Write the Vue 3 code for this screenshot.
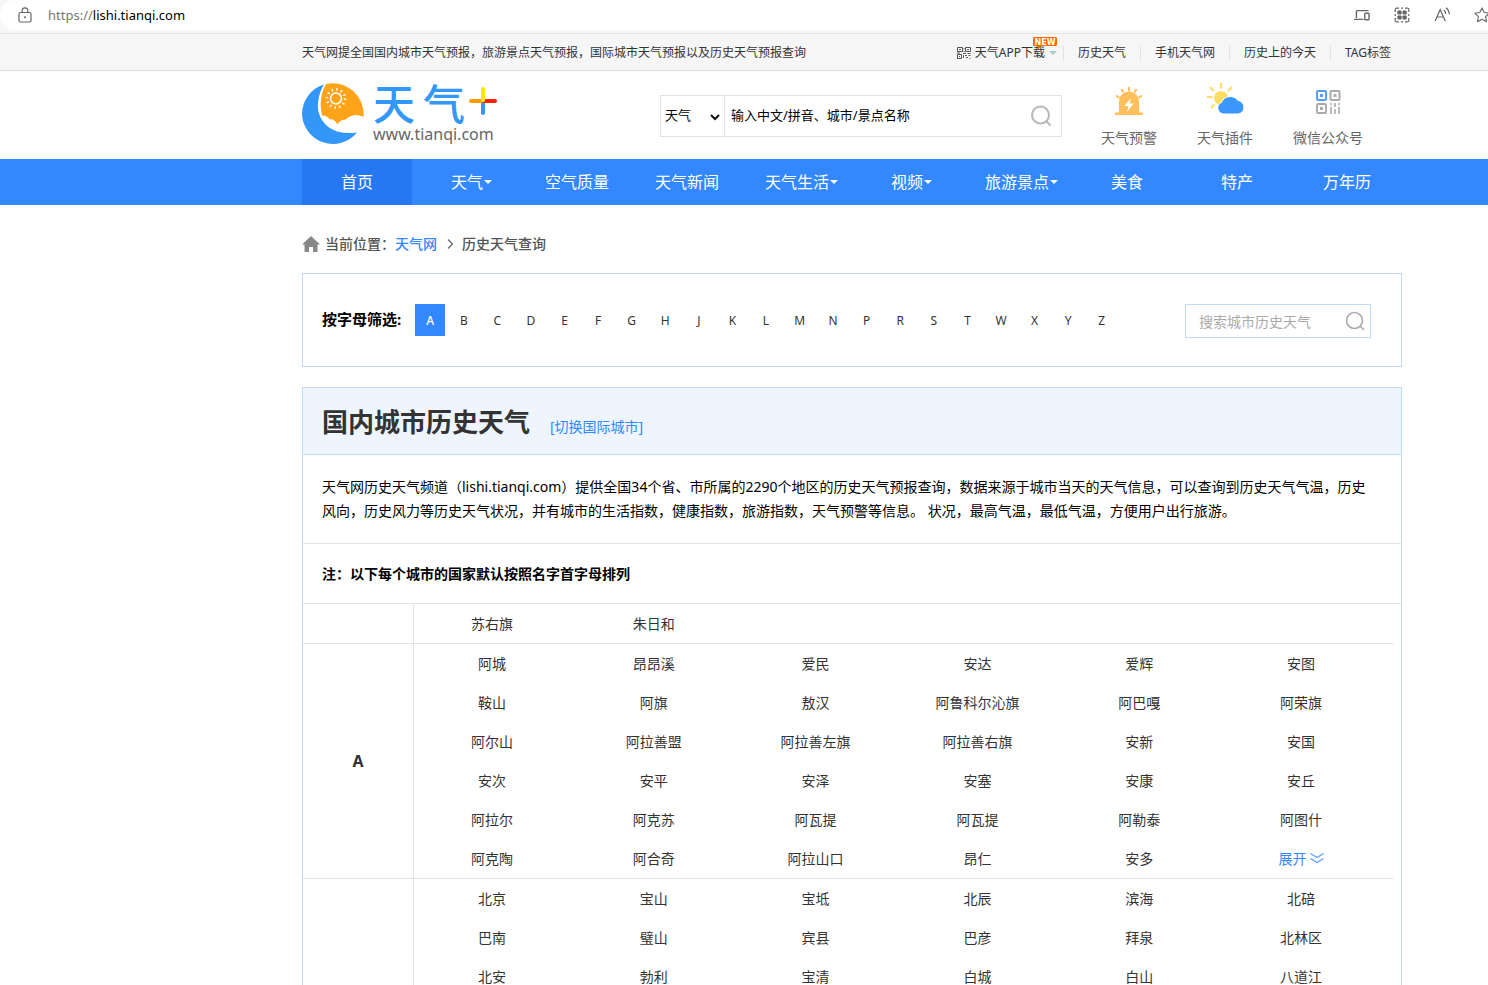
<script setup>
import { ref } from 'vue'

const topLinks = ['历史天气', '手机天气网', '历史上的今天', 'TAG标签']
const nav = [
  { name: '首页', active: true },
  { name: '天气', more: true },
  { name: '空气质量' },
  { name: '天气新闻' },
  { name: '天气生活', more: true },
  { name: '视频', more: true },
  { name: '旅游景点', more: true },
  { name: '美食' },
  { name: '特产' },
  { name: '万年历' },
]
const letters = 'ABCDEFGHJKLMNPRSTWXYZ'.split('')
const current = ref('A')
const groups = [
  { letter: '', cities: ['苏右旗', '朱日和'] },
  {
    letter: 'A',
    more: true,
    cities: [
      '阿城', '昂昂溪', '爱民', '安达', '爱辉', '安图',
      '鞍山', '阿旗', '敖汉', '阿鲁科尔沁旗', '阿巴嘎', '阿荣旗',
      '阿尔山', '阿拉善盟', '阿拉善左旗', '阿拉善右旗', '安新', '安国',
      '安次', '安平', '安泽', '安塞', '安康', '安丘',
      '阿拉尔', '阿克苏', '阿瓦提', '阿瓦提', '阿勒泰', '阿图什',
      '阿克陶', '阿合奇', '阿拉山口', '昂仁', '安多',
    ],
  },
  {
    letter: '',
    cities: [
      '北京', '宝山', '宝坻', '北辰', '滨海', '北碚',
      '巴南', '璧山', '宾县', '巴彦', '拜泉', '北林区',
      '北安', '勃利', '宝清', '白城', '白山', '八道江',
    ],
  },
]
</script>

<template>
  <div class="window">
    <div class="browser">
      <div class="address">
        <svg class="lock" width="14" height="16" viewBox="0 0 14 16" fill="none" stroke="#666">
          <rect x="1" y="5.5" width="12" height="9.5" rx="1.5" stroke-width="1.2" />
          <path d="M4.2 5.5V3.6a2.8 2.8 0 0 1 5.6 0v1.9" stroke-width="1.2" />
          <circle cx="7" cy="10.2" r="1" fill="#666" stroke="none" />
        </svg>
        <span class="url"><i>https://</i>lishi.tianqi.com</span>
        <div class="tools">
          <svg width="16" height="16" viewBox="0 0 16 16" fill="none" stroke="#666" stroke-width="1.4">
            <path d="M14.500 3.600H3.400a1 1 0 0 0-1 1V11M0 12.400h9.500" />
            <rect x="10.800" y="6.200" width="4.200" height="6.600" rx=".8" />
          </svg>
          <svg width="16" height="16" viewBox="0 0 16 16" fill="none" stroke="#666" stroke-width="1.200">
            <path d="M5 1.200H2.600A1.400 1.400 0 0 0 1.200 2.600V5M11 1.200h2.400a1.400 1.400 0 0 1 1.400 1.400V5M5 14.800H2.600a1.400 1.400 0 0 1-1.400-1.400V11M11 14.800h2.400a1.400 1.400 0 0 0 1.400-1.400V11M7 1.200h2M7 14.800h2M1.200 7v2M14.800 7v2" />
            <g fill="#666" stroke="none">
              <rect x="3.400" y="3.600" width="4.200" height="4" rx=".8" /><rect x="8.500" y="3.600" width="4.200" height="4" rx=".8" />
              <rect x="3.400" y="8.500" width="4.200" height="4" rx=".8" /><rect x="8.500" y="8.500" width="4.200" height="4" rx=".8" />
            </g>
          </svg>
          <svg width="16" height="16" viewBox="0 0 16 16" fill="none" stroke="#666" stroke-width="1.200">
            <path d="M1.200 14 6.200 2.400 11.200 14M3 10h6.400M9.800 3q1.800 1.400 1.900 4M12 .8q3.200 2.200 3.400 6.400" />
          </svg>
          <svg width="16" height="16" viewBox="0 0 16 16" fill="none" stroke="#666" stroke-width="1.100" stroke-linejoin="round">
            <path d="m8 .9 2.200 4.600 5 .7-3.600 3.500.9 5L8 12.300l-4.500 2.400.9-5L.8 6.200l5-.7z" />
          </svg>
        </div>
      </div>
    </div>

    <div class="topbar">
      <div class="wrap topbar-row">
        <p>天气网提全国国内城市天气预报，旅游景点天气预报，国际城市天气预报以及历史天气预报查询</p>
        <ul>
          <li>
            <a href="#" class="app">
              <svg width="14" height="12" viewBox="0 0 14 12" fill="none" stroke="#555">
                <path d="M.5.5h5v4h-5zM8.500.5h5v4h-5zM.5 7.500h4v4h-4zM2 2.500h2M10 2.500h2M2 9.500h1M6 6.500h3M10.500 6.500h3M6.500 8v3M8 8.500h2M9 10.500h2M11.500 8.500h2M12.500 11.500h1M0 6h3M7 1v1M7 4v1" />
              </svg>
              <span>天气APP下载</span>
              <b class="tri"></b>
              <svg class="new" width="24" height="13" viewBox="0 0 24 13">
                <path d="M1 0h22l1 1v7l-1 1H8l-3 4V9H1L0 8V1z" fill="#ff6600" />
                <text x="12" y="7.500" text-anchor="middle" class="new-text">NEW</text>
              </svg>
            </a>
          </li>
          <li v-for="l in topLinks" :key="l"><a href="#">{{ l }}</a></li>
        </ul>
      </div>
    </div>

    <header class="wrap header">
      <a href="#" class="logo">
        <svg width="63" height="63" viewBox="0 0 63 63">
          <path d="M22 1.500A31 31 0 0 0 0 31a31 31 0 0 0 55 18.500Q45 51 35 48.500 25 45 20 37 15 29 16 20 17 9 22 1.500z" fill="#3397f8" />
          <path d="M24 1A31 31 0 0 1 61.500 34Q56 31 51 32.500 46 33.500 44 36.500 38 36.500 35.500 41.500 32 35.500 28 36.500 25 32.500 20 32.500 16 15 24 1z" fill="#ffa318" />
          <circle cx="34" cy="15.500" r="5.500" fill="none" stroke="#fff" stroke-width="1.500" />
          <circle cx="34" cy="15.500" r="9" fill="none" stroke="#fff" stroke-width="2.600" stroke-dasharray="1.400 3.312" />
        </svg>
        <span class="brand">
          <span class="brand-name">
            <span>天</span><span>气</span>
            <svg width="28" height="28" viewBox="0 0 28 28" stroke-width="4" stroke-linecap="round">
              <path d="M14 16v10" stroke="#3397f8" />
              <path d="M2 14h11" stroke="#ff9c00" />
              <path d="M15 14h11" stroke="#ff1e00" />
              <path d="M14 2v11" stroke="#ffe800" />
            </svg>
          </span>
          <span class="brand-url">www.tianqi.com</span>
        </span>
      </a>
      <form class="search" @submit.prevent>
        <select aria-label="搜索类别"><option>天气</option></select>
        <svg class="chev" width="10" height="7" viewBox="0 0 10 7" fill="none" stroke="#111" stroke-width="2">
          <path d="m1 1 4 4 4-4" />
        </svg>
        <input type="text" aria-label="搜索" placeholder="输入中文/拼音、城市/景点名称" />
        <button type="submit" aria-label="搜索">
          <svg width="22" height="22" viewBox="0 0 22 22" fill="none" stroke="#b8b8b8" stroke-width="2">
            <circle cx="10.500" cy="10" r="8.500" /><path d="m16.500 16.500 4 4" />
          </svg>
        </button>
      </form>
      <nav class="quick">
        <a href="#">
          <svg width="38" height="34" viewBox="0 0 38 34">
            <path d="M5 29.500h4V18a10 9.500 0 0 1 20 0v11.500h4V32H5z" fill="#ffbf5a" />
            <path d="m21 15-6.500 8h4l-1.500 6 6.500-8.500h-4z" fill="#fff" />
            <path d="m6 12.500 3.500 2.500M11.500 6l2 3.500M19 4v4.500M26.500 6l-2 3.500M32 12.500l-3.500 2.500" stroke="#ffbf5a" stroke-width="2" />
          </svg>
          天气预警
        </a>
        <a href="#">
          <svg width="38" height="34" viewBox="0 0 38 34">
            <circle cx="15" cy="15" r="7" fill="#ffdc62" />
            <path d="M15 0v5.500M4 4l4 4M26 4l-4 4M1 14h5.500M5 25l3.500-3.500" stroke="#ffdc62" stroke-width="2" />
            <path d="M17 31a6 6 0 0 1-1.500-11.500A9.500 9.500 0 0 1 32 17.500a6.800 6.800 0 0 1 0 13.500z" fill="#3b97fb" stroke="#fff" />
          </svg>
          天气插件
        </a>
        <a href="#">
          <svg width="38" height="34" viewBox="0 0 38 34" fill="none" stroke-width="2">
            <rect x="8" y="8" width="9" height="9" rx="1" stroke="#5b9dfb" />
            <rect x="11" y="11" width="3" height="3" fill="#5b9dfb" />
            <g stroke="#aaa">
              <rect x="21.500" y="8" width="9" height="9" rx="1" />
              <rect x="8" y="21" width="9" height="9" rx="1" />
              <path d="M22 20v2M22 24v7M26 20v4M26 26v5M30 20v2M30 24v7" stroke-width="1.600" />
            </g>
            <rect x="24.500" y="11" width="3" height="3" fill="#aaa" />
            <rect x="11" y="24" width="3" height="3" fill="#aaa" />
          </svg>
          微信公众号
        </a>
      </nav>
    </header>

    <nav class="mainnav">
      <div class="wrap mainnav-row">
        <a v-for="n in nav" :key="n.name" href="#" :class="{ active: n.active }"><span :class="{ more: n.more }">{{ n.name }}</span></a>
      </div>
    </nav>

    <main class="wrap">
      <div class="crumbs">
        <svg width="18" height="16" viewBox="0 0 18 16" fill="#888">
          <path d="M9 0 18 8.500h-2.500V16h-4.500v-5H7v5H2.500V8.500H0z" />
        </svg>
        <span class="crumb-label">当前位置：</span>
        <a href="#">天气网</a>
        <svg class="sep" width="7" height="10" viewBox="0 0 7 10" fill="none" stroke="#666" stroke-width="1.300"><path d="m1 .5 4.500 4.500L1 9.500" /></svg>
        <span>历史天气查询</span>
      </div>

      <section class="filter">
        <strong>按字母筛选:</strong>
        <div class="letters">
          <button v-for="l in letters" :key="l" type="button" :class="{ on: l === current }" @click="current = l">{{ l }}</button>
        </div>
        <form class="city-search" @submit.prevent>
          <input type="text" aria-label="搜索城市历史天气" placeholder="搜索城市历史天气" />
          <button type="submit" aria-label="搜索">
            <svg width="20" height="20" viewBox="0 0 20 20" fill="none" stroke="#aaa" stroke-width="1.600">
              <circle cx="9.500" cy="9.500" r="8" /><path d="m15.500 15.500 3.500 3.500" />
            </svg>
          </button>
        </form>
      </section>

      <section class="panel">
        <div class="panel-head">
          <h1>国内城市历史天气</h1>
          <a href="#">[切换国际城市]</a>
        </div>
        <p class="intro">天气网历史天气频道（lishi.tianqi.com）提供全国34个省、市所属的2290个地区的历史天气预报查询，数据来源于城市当天的天气信息，可以查询到历史天气气温，历史风向，历史风力等历史天气状况，并有城市的生活指数，健康指数，旅游指数，天气预警等信息。 状况，最高气温，最低气温，方便用户出行旅游。</p>
        <p class="note">注：以下每个城市的国家默认按照名字首字母排列</p>
        <table>
          <tbody>
            <tr v-for="(g, i) in groups" :key="i">
              <th scope="row">{{ g.letter }}</th>
              <td>
                <ul>
                  <li v-for="(c, j) in g.cities" :key="j"><a href="#">{{ c }}</a></li>
                  <li v-if="g.more">
                    <button type="button">展开<svg width="14" height="11" viewBox="0 0 14 11" fill="none" stroke="#5a9dff" stroke-width="1.200"><path d="m.5.5 6.500 4 6.500-4M.5 5.500l6.500 4 6.500-4" /></svg></button>
                  </li>
                </ul>
              </td>
            </tr>
          </tbody>
        </table>
      </section>
    </main>
  </div>
</template>

<style>
body {
  margin: 0;
  background: #fff;
}
</style>

<style scoped>
.window {
  height: 100vh;
  overflow: hidden;
  font-family: "Noto Sans", "Noto Sans CJK SC", sans-serif;
  font-size: 14px;
  line-height: 24px;
  color: #333;
}
.window * {
  box-sizing: border-box;
}
a {
  color: inherit;
  text-decoration: none;
}
p,
h1,
ul {
  margin: 0;
  padding: 0;
  list-style: none;
}
button,
input,
select {
  font-family: inherit;
  padding: 0;
  border: 0;
  background: none;
  outline: none;
  border-radius: 0;
}
svg {
  display: block;
  flex: none;
}
.wrap {
  margin: 0 86px 0 302px;
}

.browser {
  background: #f7f7f7;
  padding-bottom: 3px;
  border-bottom: 1px solid #e6e6e6;
}
.address {
  display: flex;
  align-items: center;
  height: 30px;
  padding-left: 18px;
  background: #fff;
  border-radius: 15px 0 0 15px;
}
.url {
  flex: 1;
  margin-left: 16px;
  font-size: 13px;
  color: #000;
}
.url i {
  font-style: normal;
  color: #777;
}
.tools {
  display: flex;
  gap: 24px;
  margin-right: -2px;
}

.topbar {
  background: #f6f6f6;
  border-bottom: 1px solid #ddd;
  font-size: 12px;
}
.topbar-row {
  display: flex;
  justify-content: space-between;
  align-items: center;
  height: 36px;
  padding-top: 2px;
  white-space: nowrap;
}
.topbar ul {
  display: flex;
  padding-right: 11px;
}
.topbar li {
  padding: 0 14px;
  border-right: 1px solid #e4e0e0;
  line-height: 14px;
}
.topbar li:first-child {
  padding-right: 6px;
}
.topbar li:last-child {
  padding-right: 0;
  border: 0;
}
.app {
  position: relative;
  display: flex;
  align-items: center;
  gap: 4px;
}
.tri {
  border: 4px solid transparent;
  border-top-color: #a9cbd6;
  border-bottom: 0;
}
.new {
  position: absolute;
  right: 0;
  top: -9px;
}
.new-text {
  font: bold 8px "DejaVu Sans", sans-serif;
  fill: #fff;
}

.header {
  display: flex;
  align-items: flex-start;
  height: 88px;
}
.logo {
  display: flex;
  gap: 8px;
  padding-top: 12px;
  width: 358px;
}
.brand-name {
  display: flex;
  align-items: center;
  gap: 8px;
  height: 42px;
  font-size: 42px;
  font-weight: 500;
  line-height: 40px;
  color: #3397f8;
}
.brand-name svg {
  margin-left: -4px;
  align-self: flex-start;
  margin-top: 4px;
}
.brand-url {
  display: block;
  font-size: 16px;
  line-height: 18px;
  color: #666;
}
.search {
  position: relative;
  display: flex;
  flex: 1;
  max-width: 402px;
  height: 42px;
  margin-top: 24px;
  border: 1px solid #e2e2e2;
}
.search select {
  appearance: none;
  width: 64px;
  padding: 0 0 2px 4px;
  font-size: 13px;
  color: #000;
  border-right: 1px solid #e2e2e2;
}
.chev {
  position: absolute;
  left: 49px;
  top: 18px;
  pointer-events: none;
}
.search input {
  flex: 1;
  min-width: 0;
  padding: 0 0 2px 6px;
  font-size: 13px;
}
.search input::placeholder {
  color: #000;
  opacity: 1;
}
.search button {
  padding-right: 9px;
}
.quick {
  display: flex;
  gap: 40px;
  margin-left: auto;
  padding: 12px 39px 0 0;
  white-space: nowrap;
  color: #666;
}
.quick a {
  display: flex;
  flex-direction: column;
  align-items: center;
  gap: 9px;
}

.mainnav {
  background: #3388ff;
}
.mainnav-row {
  display: flex;
}
.mainnav a {
  flex: 1;
  display: flex;
  justify-content: center;
  align-items: center;
  height: 46px;
  font-size: 16px;
  color: #fff;
}
.mainnav .active {
  background: #2578f2;
}
.more {
  position: relative;
}
.more::after {
  content: "";
  position: absolute;
  left: 100%;
  top: 10px;
  margin-left: 1px;
  border: 4px solid transparent;
  border-top-color: #fff;
  border-bottom: 0;
}

.crumbs {
  display: flex;
  align-items: center;
  height: 68px;
  padding-top: 10px;
  font-weight: 500;
  color: #555;
}
.crumb-label {
  margin-left: 5px;
}
.crumbs a {
  color: #3388ff;
}
.crumbs .sep {
  margin: 0 8px 0 10px;
}

.filter {
  display: flex;
  align-items: flex-start;
  padding: 30px 30px 28px 19px;
  border: 1px solid #bfdbff;
}
.filter strong {
  font-size: 15px;
  line-height: 30px;
  color: #000;
}
.letters {
  flex: 1;
  display: flex;
  justify-content: space-between;
  margin: 0 68px 0 14px;
}
.letters button {
  width: 30px;
  height: 32px;
  font-size: 12px;
  color: #333;
}
.letters .on {
  background: #3388ff;
  color: #fff;
  font-weight: 500;
}
.city-search {
  display: flex;
  width: 186px;
  height: 34px;
  border: 1px solid #bfdbff;
}
.city-search input {
  flex: 1;
  min-width: 0;
  padding-left: 13px;
  font-size: 14px;
}
.city-search input::placeholder {
  color: #aaa;
  opacity: 1;
}
.city-search button {
  padding-right: 5px;
}

.panel {
  margin-top: 20px;
  border: 1px solid #bfdbff;
}
.panel-head {
  display: flex;
  align-items: baseline;
  gap: 20px;
  height: 67px;
  padding: 0 19px;
  background: #eef5ff;
  border-bottom: 1px solid #bfdbff;
}
.panel-head h1 {
  font-size: 26px;
  line-height: 68px;
}
.panel-head a {
  color: #3388ff;
}
.intro {
  padding: 20px 30px 20px 19px;
  border-bottom: 1px solid #e5e5e5;
  color: #000;
}
.note {
  padding: 18px 19px 17px;
  border-bottom: 1px solid #e5e5e5;
  font-weight: 700;
  color: #000;
}
table {
  width: calc(100% - 7px);
  border-collapse: separate;
  border-spacing: 0;
  table-layout: fixed;
}
th {
  width: 111px;
  padding: 0;
  font-size: 16px;
  border-right: 1px solid #e5e5e5;
}
tr + tr > * {
  border-top: 1px solid #e5e5e5;
}
td {
  padding: 0 15px 0 0;
}
td ul {
  display: grid;
  grid-template-columns: repeat(6, 1fr);
  column-gap: 6px;
}
td li {
  height: 39px;
  line-height: 39px;
  text-align: center;
  white-space: nowrap;
}
td button {
  display: inline-flex;
  align-items: center;
  gap: 3px;
  font-size: 14px;
  color: #3388ff;
}
</style>
